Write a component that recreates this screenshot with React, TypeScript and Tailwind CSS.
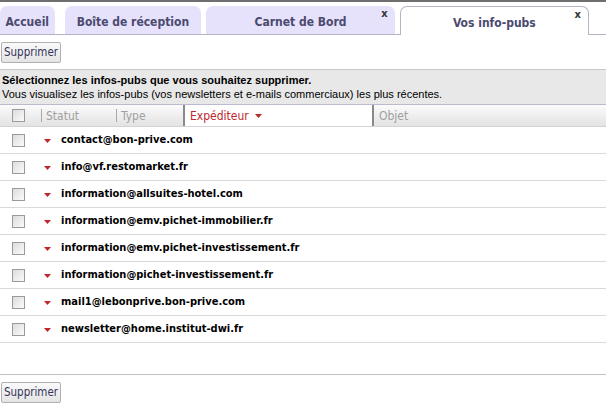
import React from "react"

const senders = [
  "contact@bon-prive.com",
  "info@vf.restomarket.fr",
  "information@allsuites-hotel.com",
  "information@emv.pichet-immobilier.fr",
  "information@emv.pichet-investissement.fr",
  "information@pichet-investissement.fr",
  "mail1@lebonprive.bon-prive.com",
  "newsletter@home.institut-dwi.fr",
]

const tahoma = { fontFamily: '"DejaVu Sans Condensed", "DejaVu Sans", sans-serif' }

function Caret({ className = "" }: { className?: string }) {
  return (
    <svg width="7" height="4" viewBox="0 0 7 4" className={className}>
      <path d="M0 0 L7 0 L3.5 4 Z" fill="#c0272d" />
    </svg>
  )
}

function Checkbox() {
  return (
    <div className="h-[13px] w-[13px] border border-[#9a9a9a] bg-gradient-to-br from-[#dcdcdc] to-[#fbfbfb]" />
  )
}

function Tab({ label, width, active, closable }: { label: string; width: number; active?: boolean; closable?: boolean }) {
  return (
    <div
      className={
        "relative flex h-[28px] items-center justify-center rounded-t-[7px] text-[12px] font-bold text-[#4b4a6e] " +
        (active
          ? "z-10 -mb-px h-[29px] border border-b-0 border-[#b4b2c4] bg-white"
          : "bg-[#e6e2fb]")
      }
      style={{ width }}
    >
      <span className="mt-[3px]">{label}</span>
      {closable && (
        <span className="absolute right-[7px] top-[2px] text-[11px] font-bold leading-none text-[#333]">x</span>
      )}
    </div>
  )
}

function Button() {
  return (
    <button
      className="h-[21px] w-[60px] rounded-[2px] border border-[#b0b0b0] bg-gradient-to-b from-[#fafafa] to-[#e4e4e4] text-[11.5px] text-[#35345a]"
      style={tahoma}
    >
      Supprimer
    </button>
  )
}

export default function App() {
  return (
    <div className="flex h-[406px] w-[606px] flex-col overflow-hidden bg-white" style={tahoma}>
      <div className="h-[2px] bg-[#6f6f6f]" />
      {/* tabs */}
      <div className="flex h-[33px] items-end gap-[5px] border-b border-[#b4b2c4] pr-[17px]">
        <Tab label="Accueil" width={55} />
        <div className="w-0" />
        <Tab label="Boîte de réception" width={138} />
        <Tab label="Carnet de Bord" width={190} closable />
        <Tab label="Vos info-pubs" width={191} active closable />
      </div>

      <div className="flex h-[35px] items-center border-b border-[#c8c8c8] pl-[1px] pt-[1px]">
        <Button />
      </div>

      {/* info */}
      <div
        className="flex h-[35px] flex-col justify-center border-b border-[#bdbacd] bg-[#e8e8e8] pl-[2px] text-[11px] leading-[14px] text-black"
        style={{ fontFamily: '"Liberation Sans", Arial, sans-serif' }}
      >
        <div className="font-bold">Sélectionnez les infos-pubs que vous souhaitez supprimer.</div>
        <div>Vous visualisez les infos-pubs (vos newsletters et e-mails commerciaux) les plus récentes.</div>
      </div>

      {/* header */}
      <div className="flex h-[22px] border-b border-[#d4d4d4] bg-gradient-to-b from-[#fbfbfb] to-[#e3e3e3] text-[12px] text-[#a0a0a0]">
        <div className="flex w-[41px] items-center pl-[12px]">
          <Checkbox />
        </div>
        <div className="my-[4px] flex w-[75px] items-center border-l border-[#a8a8a8] pl-[4px]">Statut</div>
        <div className="my-[4px] flex w-[67px] items-center border-l border-[#a8a8a8] pl-[4px]">Type</div>
        <div className="flex w-[189px] items-center gap-[6px] border-l-2 border-[#8a8a8a] bg-white pl-[5px] text-[#c0272d]">
          Expéditeur
          <Caret />
        </div>
        <div className="flex flex-1 items-center border-l-2 border-[#8a8a8a] pl-[5px]">Objet</div>
      </div>

      {/* rows */}
      <div className="flex flex-col">
        {senders.map((s) => (
          <div key={s} className="flex h-[27px] items-center border-b border-[#d9d9d9]">
            <div className="flex w-[44px] justify-start pl-[12px]">
              <Checkbox />
            </div>
            <Caret className="mt-[1px]" />
            <span className="ml-[10px] text-[11px] font-bold text-black">{s}</span>
          </div>
        ))}
      </div>

      <div className="flex-1" />
      <div className="flex h-[32px] items-start border-t border-[#c0c0c0] pl-[1px] pt-[7px]">
        <Button />
      </div>
    </div>
  )
}
